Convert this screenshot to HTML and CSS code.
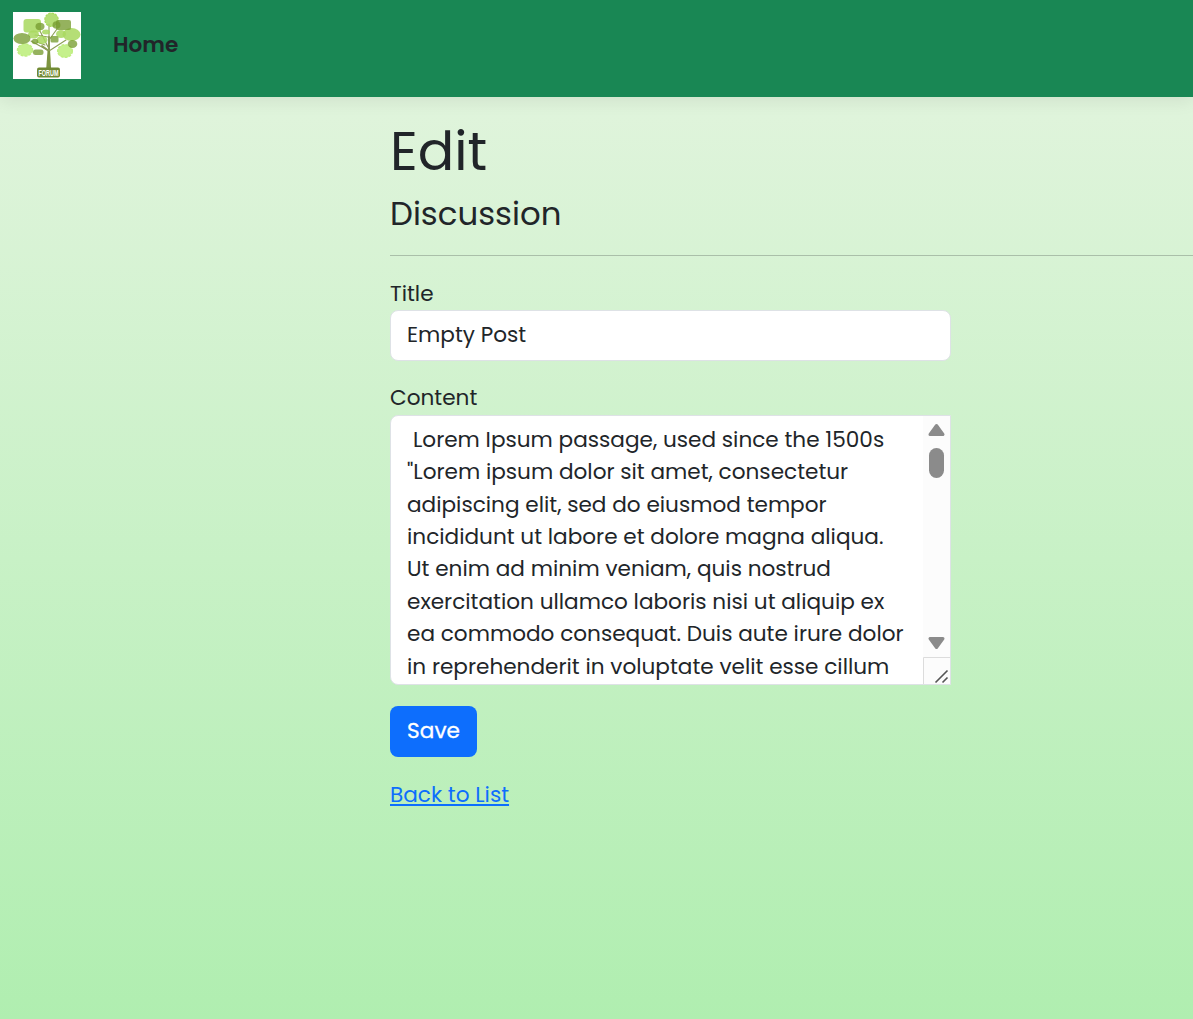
FILE: index.html
```html
<!DOCTYPE html>
<html lang="en">
<head>
<meta charset="utf-8">
<title>Edit - Forum</title>
<link rel="stylesheet" href="styles.css">
</head>
<body>
<header class="navbar">
  <svg class="logo" viewBox="0 0 68 67" role="img" aria-label="Forum">
    <rect width="68" height="67" fill="#fff"/>
    <g fill="none" stroke="#8c9d56" stroke-width="1.1" stroke-linecap="round">
      <path d="M36 39L18 29M36 39L53 28M35 35L27 19M36 28L44 17M36 29V12M35 25L22 23M32 33l-8-3"/>
      <path stroke-width="2" d="M36 39V25M36 39l-7-5"/>
    </g>
    <path d="M33.200 57l1.300-18h2.600l1 18z" fill="#7d9440"/>
    <g fill="#a9d95f" fill-opacity=".86">
      <rect x="10.500" y="7" width="17.500" height="13.500" rx="3"/>
      <circle cx="38.500" cy="7.800" r="6.700" stroke="#a9d95f" stroke-width="1.200" stroke-dasharray="2.500 1"/>
      <ellipse cx="58.500" cy="22.500" rx="9" ry="6.500"/>
      <ellipse cx="20.500" cy="22.500" rx="5.500" ry="4"/>
      <ellipse cx="48" cy="22" rx="5" ry="4"/>
      <ellipse cx="29" cy="28" rx="5.500" ry="4"/>
      <ellipse cx="33" cy="20" rx="4" ry="2.500"/>
    </g>
    <g fill="#bfee80" fill-opacity=".9" stroke="#bfee80" stroke-width="1.500" stroke-dasharray="3 1">
      <ellipse cx="12" cy="38" rx="7.500" ry="6"/>
      <ellipse cx="52" cy="39" rx="7.300" ry="6.300"/>
    </g>
    <g fill="#779c31" fill-opacity=".78">
      <ellipse cx="9" cy="26.500" rx="8.500" ry="5.500"/>
      <ellipse cx="27" cy="14.500" rx="4.500" ry="3.700"/>
      <rect x="43" y="8" width="15" height="10" rx="2"/>
      <ellipse cx="43.500" cy="13" rx="4" ry="3.800"/>
      <ellipse cx="59.500" cy="32" rx="4.800" ry="4"/>
      <ellipse cx="22" cy="29.500" rx="3.300" ry="2.700"/>
      <rect x="37.500" y="24" width="8" height="6.500" rx="1.500"/>
      <rect x="20" y="37.500" width="10.500" height="5.500" rx="2.500"/>
    </g>
    <rect x="24" y="55.500" width="23" height="10" rx="2" fill="#718a33"/>
    <text class="logo-text" x="35.500" y="63.500" text-anchor="middle" textLength="20" lengthAdjust="spacingAndGlyphs">FORUM</text>
  </svg>
  <a class="nav-link">Home</a>
</header>
<main class="content">
  <h1 class="title">Edit</h1>
  <h4 class="subtitle">Discussion</h4>
  <hr class="rule">
  <form class="form">
    <label class="label-title">Title</label>
    <div class="input">Empty Post</div>
    <label class="label-content">Content</label>
    <div class="textarea">
      <div class="lines">
        <div class="line line-first">Lorem Ipsum passage, used since the 1500s</div>
        <div class="line">"Lorem ipsum dolor sit amet, consectetur</div>
        <div class="line">adipiscing elit, sed do eiusmod tempor</div>
        <div class="line">incididunt ut labore et dolore magna aliqua.</div>
        <div class="line">Ut enim ad minim veniam, quis nostrud</div>
        <div class="line">exercitation ullamco laboris nisi ut aliquip ex</div>
        <div class="line">ea commodo consequat. Duis aute irure dolor</div>
        <div class="line">in reprehenderit in voluptate velit esse cillum</div>
      </div>
      <svg class="scrollbar" viewBox="0 0 27 268">
        <rect width="27" height="268" fill="#fcfcfc"/>
        <path d="M13.500 9.500L20 18.500H7z" fill="#8b8b8b" stroke="#8b8b8b" stroke-width="3" stroke-linejoin="round"/>
        <rect x="6" y="32" width="15" height="30" rx="7.500" fill="#8b8b8b"/>
        <path d="M7 222.500H20L13.500 231.500z" fill="#8b8b8b" stroke="#8b8b8b" stroke-width="3" stroke-linejoin="round"/>
        <path d="M.5 268V241.500H27" fill="none" stroke="#dcdcdc"/>
        <path d="M12.500 266.500l12-12M19.500 266.500l5-5" stroke="#555" stroke-width="1.600"/>
      </svg>
    </div>
    <button class="save" type="button">Save</button>
  </form>
  <a class="back">Back to List</a>
</main>
</body>
</html>
```

FILE: styles.css
```css
* { box-sizing: border-box; }
body {
  margin: 0;
  height: 1019px;
  overflow: hidden;
  background: linear-gradient(#e0f4dc 97px, #b0eeb0);
  color: #212529;
  font-family: Poppins, Inter, sans-serif;
  font-size: 21.6px;
  line-height: 32.4px;
}
.navbar {
  height: 97px;
  padding: 12px 13px;
  display: flex;
  gap: 32px;
  background: #198754;
  box-shadow: 0 4px 16px rgba(0, 0, 0, .08);
}
.logo { width: 68px; height: 67px; }
.logo-text { font: 700 8.5px "Liberation Sans", sans-serif; fill: #fff; }
.nav-link { font-weight: 600; padding-top: 17px; }
.content { margin-left: 390px; display: flex; flex-direction: column; align-items: flex-start; }
.title { margin: 22px 0 0; font-size: 54px; line-height: 65px; font-weight: 400; }
.subtitle { margin: 10px 0 0; font-size: 32.4px; line-height: 39px; font-weight: 400; }
.rule { align-self: stretch; margin: 22px 0 0; border: 0; height: 1px; background: #aabfa9; }
.form { display: flex; flex-direction: column; align-items: flex-start; padding-top: 22px; }
.label-title { height: 32px; }
.input {
  width: 561px; height: 51px; padding: 8px 16px;
  border: 1px solid #dee2e6; border-radius: 8px; background: #fff;
}
.label-content { margin-top: 21px; height: 33px; }
.textarea {
  width: 561px; height: 270px; padding-left: 16px;
  display: flex; justify-content: space-between; overflow: hidden;
  border: 1px solid #dee2e6; border-radius: 8px 0 0 8px; background: #fff;
}
.lines { padding-top: 7.8px; }
.line { white-space: nowrap; width: max-content; }
.line-first { padding-left: 6px; }
.scrollbar { width: 27px; height: 268px; flex: none; }
.save {
  margin-top: 21px; width: 87px; height: 51px; padding: 0;
  border: 0; border-radius: 8px; background: #0d6efd; color: #fff;
  font: 400 21.6px/32.4px Poppins, Inter, sans-serif;
  -webkit-text-stroke: .3px #fff;
}
.back { margin-top: 22px; color: #0d6efd; text-decoration: underline; }
```
